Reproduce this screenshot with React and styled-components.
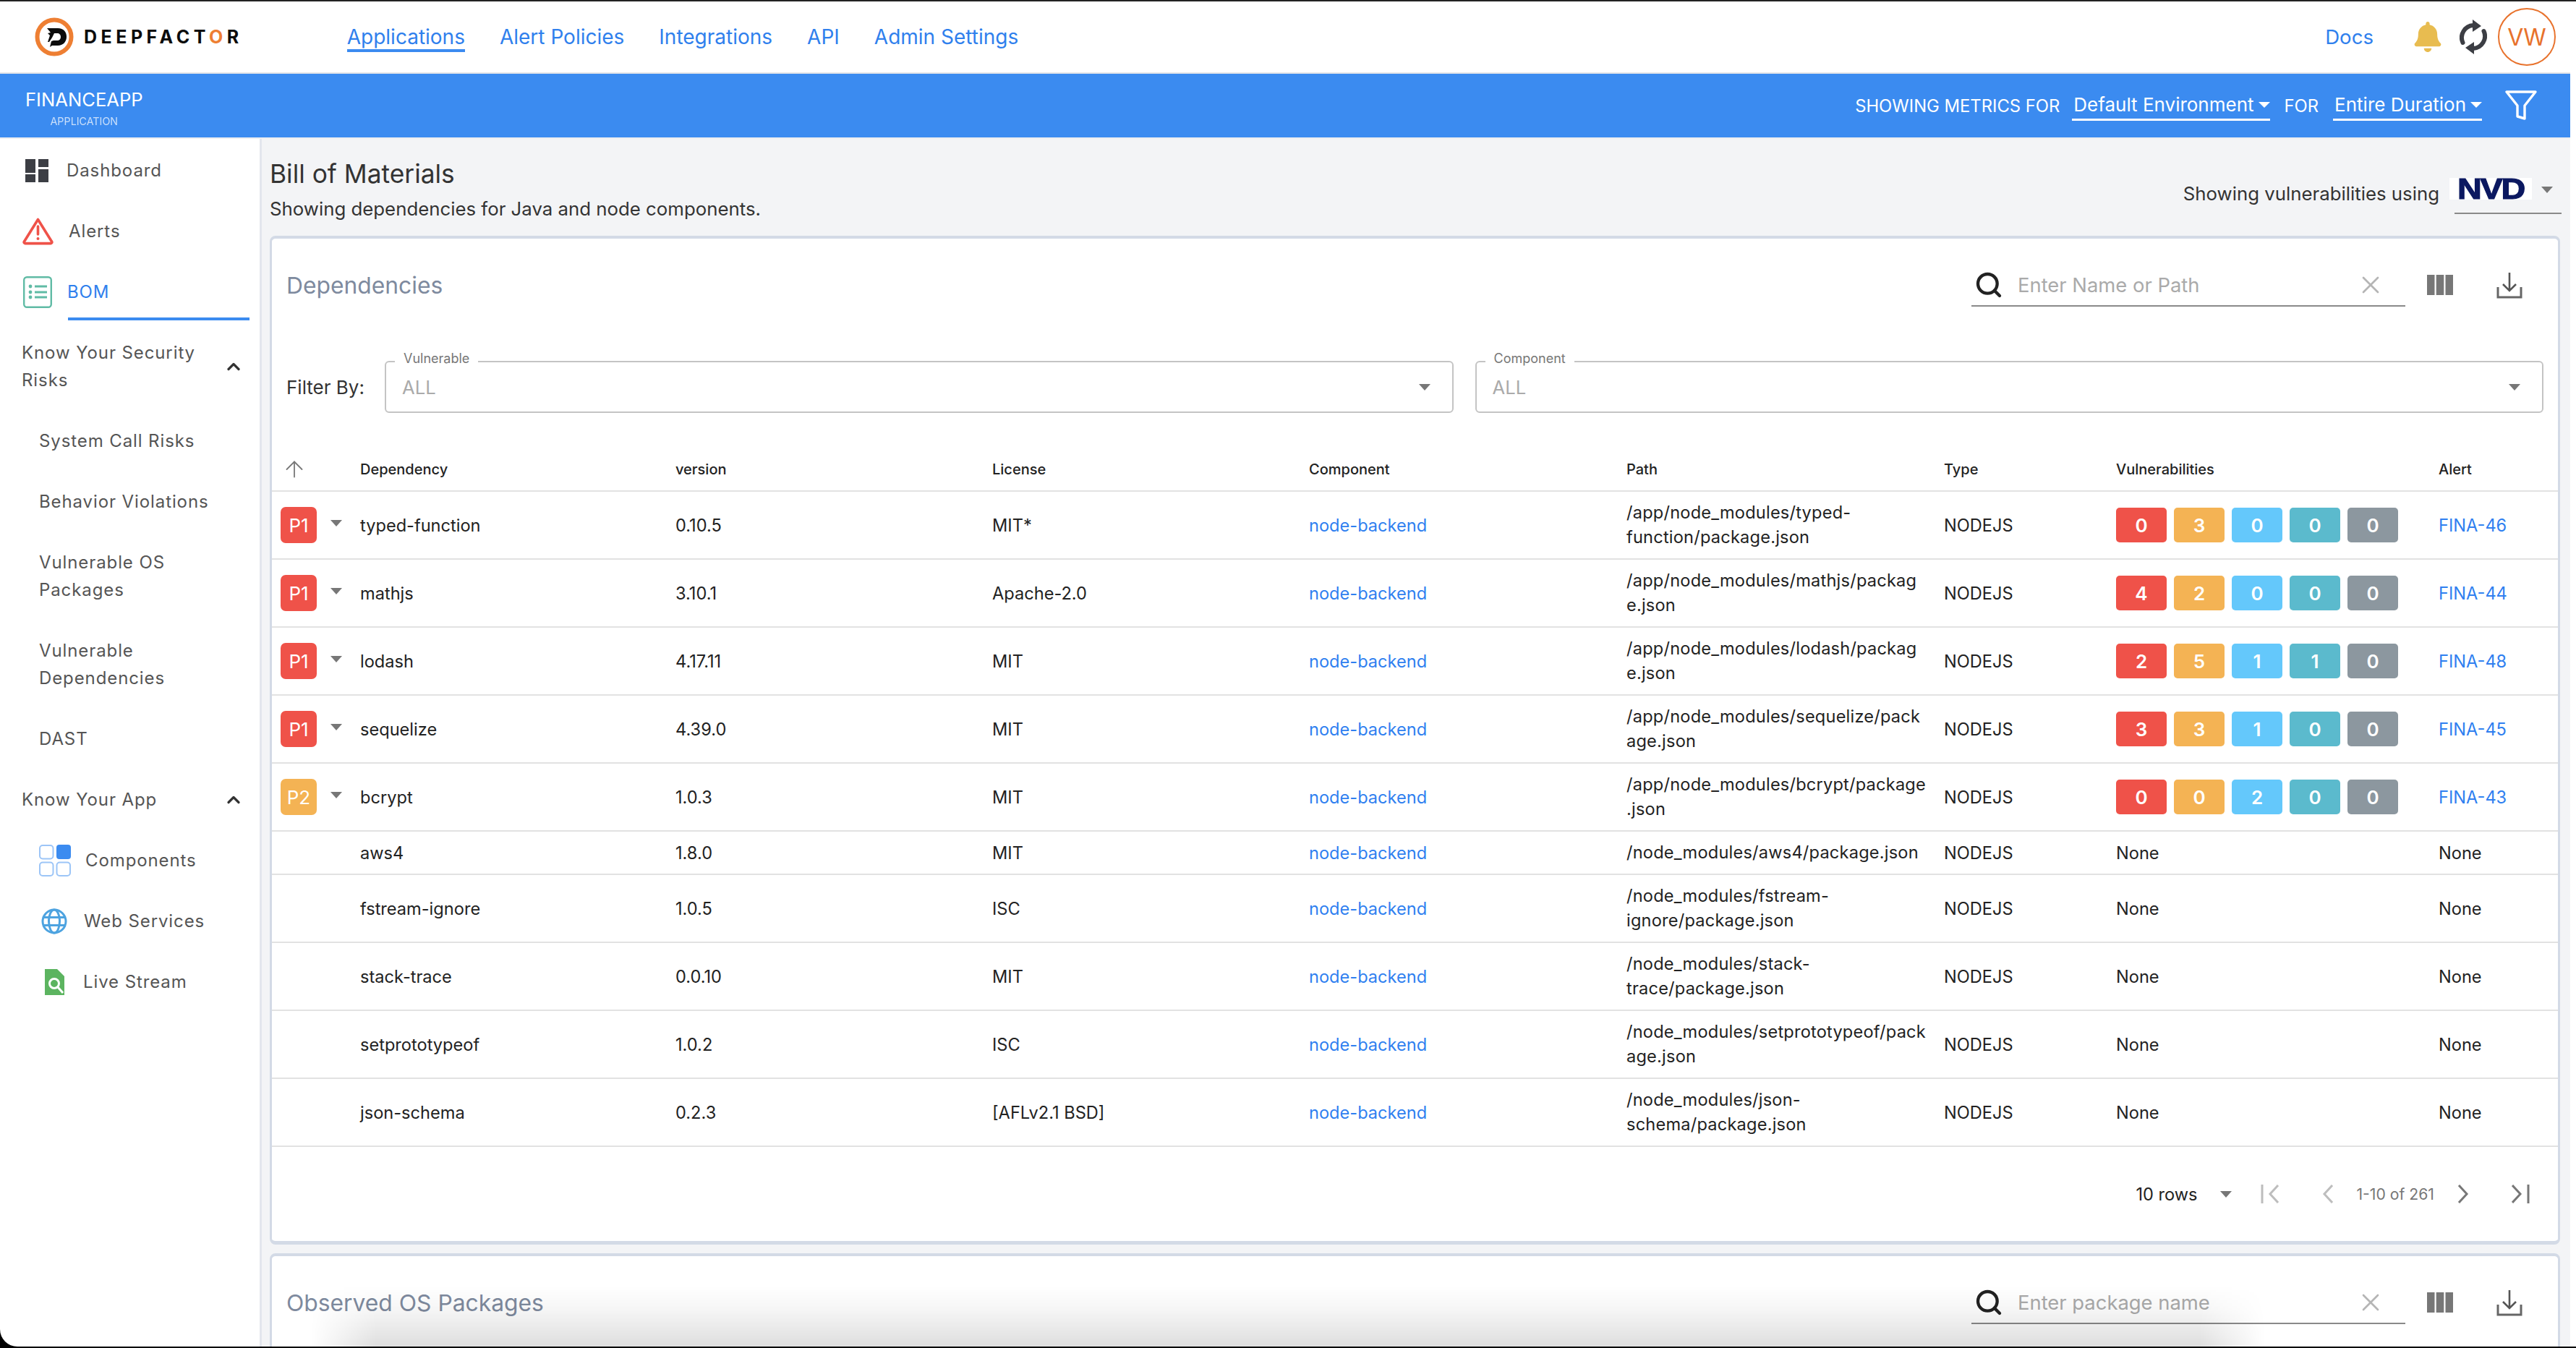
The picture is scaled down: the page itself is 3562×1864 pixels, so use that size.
import React from "react";
import styled, { createGlobalStyle } from "styled-components";
import { Search, X, ArrowUp, ChevronUp } from "lucide-react";
import { FaBell } from "react-icons/fa";

const Global = createGlobalStyle`
  html, body { margin: 0; padding: 0; background: #fff; overflow: hidden; }
  * { box-sizing: border-box; }
  body { font-family: Inter, "Noto Sans", sans-serif; color: #222; }
`;

const Page = styled.div`
  position: relative;
  width: 100vw;
  height: 100vh;
  overflow: hidden;
  background: #fff;
  padding-right: 8px;
  display: flex;
  flex-direction: column;
`;
const Frame = styled.div`
  position: absolute;
  inset: 0 0 2px 0;
  border-bottom-left-radius: 24px;
  box-shadow: 0 0 0 40px #000;
  pointer-events: none;
`;
const DockShade = styled.div`
  position: absolute;
  left: 430px;
  right: 430px;
  bottom: 2px;
  height: 84px;
  background: linear-gradient(180deg, rgba(0, 0, 0, 0) 0%, rgba(0, 0, 0, 0.03) 35%, rgba(0, 0, 0, 0.13) 100%);
  -webkit-mask-image: linear-gradient(90deg, transparent 0, #000 90px, #000 calc(100% - 90px), transparent 100%);
  mask-image: linear-gradient(90deg, transparent 0, #000 90px, #000 calc(100% - 90px), transparent 100%);
  pointer-events: none;
`;
const TopLine = styled.div`
  position: absolute;
  top: 0; left: 0; right: 0;
  height: 2px;
  background: #222;
`;
const TopBar = styled.header`
  height: 102px;
  flex: none;
  padding: 2px 20px 0 48px;
  border-bottom: 2px solid #e4e5e8;
  display: flex;
  align-items: center;
`;
const Logo = styled.div`
  display: flex;
  align-items: center;
  gap: 14px;
`;
const LogoText = styled.span`
  font-weight: 700;
  font-size: 25px;
  letter-spacing: 5.5px;
  color: #0c0c0c;
  white-space: nowrap;
  b { color: #ee7f33; font-weight: 700; }
`;
const Nav = styled.nav`
  margin-left: 144px;
  display: flex;
  gap: 48px;
`;
const NavLink = styled.a`
  position: relative;
  font-size: 28px;
  color: #2f80ed;
  white-space: nowrap;
  ${(p) => p.$active && `
    &::after {
      content: "";
      position: absolute;
      left: 0; right: 0; bottom: -4px;
      height: 4px;
      background: #3b8bf0;
    }
  `}
`;
const TopRight = styled.div`
  margin-left: auto;
  display: flex;
  align-items: center;
`;
const Docs = styled.a`
  font-size: 27.6px;
  color: #2f80ed;
  margin-right: 56px;
`;
const Bell = styled(FaBell)`
  width: 38px;
  height: 42px;
  color: #e8bc50;
  margin-right: 25px;
`;
const SyncIcon = styled.svg`
  margin-right: 15px;
  flex: none;
`;
const Avatar = styled.div`
  width: 80px;
  height: 80px;
  border-radius: 50%;
  border: 2px solid #e8722c;
  color: #e8722c;
  font-size: 32px;
  display: flex;
  align-items: center;
  justify-content: center;
`;

const Band = styled.div`
  height: 90px;
  flex: none;
  background: #3b8bf0;
  border-bottom: 2px solid #eceef1;
  padding: 0 46px 0 35px;
  display: flex;
  align-items: center;
  color: #fff;
`;
const AppName = styled.div`
  display: flex;
  flex-direction: column;
  align-items: center;
  padding-top: 6px;
`;
const AppTitle = styled.div`
  font-size: 25.6px;
  line-height: 34px;
`;
const AppSub = styled.div`
  font-size: 14.3px;
  line-height: 18px;
  margin-top: 4px;
  opacity: 0.72;
`;
const Metrics = styled.div`
  margin-left: auto;
  display: flex;
  align-items: center;
`;
const MetricText = styled.span`
  font-size: 23.8px;
  white-space: nowrap;
  margin-right: ${(p) => p.$gap}px;
`;
const Dropdown = styled.span`
  display: flex;
  align-items: center;
  gap: 6px;
  height: 42px;
  font-size: 26px;
  white-space: nowrap;
  border-bottom: 3px solid #fff;
  margin-right: ${(p) => p.$gap}px;
  padding-left: 2px;
`;
const WhiteCaret = styled.span`
  width: 0;
  height: 0;
  border-left: 8px solid transparent;
  border-right: 8px solid transparent;
  border-top: 8px solid #fff;
`;

const Body = styled.div`
  flex: 1;
  min-height: 0;
  display: flex;
`;
const Sidebar = styled.aside`
  width: 362px;
  flex: none;
  background: #fff;
  border-right: 3px solid #e3e6ed;
  color: #555;
  font-size: 24px;
  letter-spacing: 0.9px;
  line-height: 38px;
  padding-top: 2px;
`;
const SideItem = styled.div`
  position: relative;
  height: 84px;
  display: flex;
  align-items: center;
  padding-left: ${(p) => p.$pad ?? 31}px;
  color: ${(p) => (p.$active ? "#2f80ed" : "inherit")};
`;
const SideIcon = styled.svg`
  flex: none;
  margin-right: ${(p) => p.$gap}px;
`;
const ActiveBar = styled.span`
  position: absolute;
  left: 94px;
  right: 14px;
  bottom: 3px;
  height: 4px;
  background: #3b8bf0;
`;
const GroupHead = styled.div`
  display: flex;
  align-items: center;
  justify-content: space-between;
  padding: 23px 22px 23px 30px;
`;
const GroupText = styled.span`
  max-width: 260px;
`;
const Chevron = styled(ChevronUp)`
  color: #333;
  flex: none;
`;
const SubItem = styled.div`
  padding: 23px 60px 23px 54px;
`;

const Main = styled.main`
  flex: 1;
  min-width: 0;
  background: #f3f4f6;
  padding: 0 14px 0 11px;
  overflow: hidden;
`;
const TitleRow = styled.div`
  display: flex;
  justify-content: space-between;
  align-items: flex-end;
  padding-top: 26px;
  height: 134px;
`;
const TitleBlock = styled.div`
  align-self: flex-start;
`;
const Title = styled.h1`
  margin: 0;
  font-weight: 400;
  font-size: 35.3px;
  line-height: 46px;
  color: #333;
`;
const Subtitle = styled.p`
  margin: 7px 0 0;
  font-size: 25.8px;
  line-height: 36px;
  color: #333;
`;
const Source = styled.div`
  display: flex;
  align-items: center;
  margin-right: -2px;
  margin-bottom: 30px;
  font-size: 25.8px;
  color: #333;
`;
const SourceLabel = styled.span`
  margin-bottom: 8px;
  white-space: nowrap;
`;
const SourceSelect = styled.div`
  margin-left: 21px;
  width: 148px;
  height: 50px;
  border-bottom: 2px solid #8a8a8a;
  display: flex;
  align-items: flex-start;
  justify-content: space-between;
  padding-right: 12px;
`;
const NvdLogo = styled.span`
  display: block;
  width: 100px;
  height: 30px;
  background: #fff;
  color: #0b1860;
  font-family: "Liberation Sans", sans-serif;
  font-weight: 700;
  font-size: 41px;
  line-height: 30px;
  letter-spacing: -2px;
  text-align: center;
  -webkit-text-stroke: 1.2px #0b1860;
  transform: scaleX(1.14);
  transform-origin: 50% 50%;
`;
const GreyCaret = styled.span`
  width: 0;
  height: 0;
  border-left: 8px solid transparent;
  border-right: 8px solid transparent;
  border-top: 9px solid #777;
  margin-top: ${(p) => p.$top ?? 0}px;
  margin-left: ${(p) => p.$left ?? 0}px;
  flex: none;
`;

const Card = styled.section`
  background: #fff;
  border: solid #d3dae6;
  border-width: 4px 3px 5px;
  border-radius: 8px;
  margin-bottom: 12px;
  ${(p) => p.$open && "min-height: 400px;"}
`;
const CardHead = styled.div`
  height: 94px;
  padding: 36px 49px 0 20px;
  display: flex;
  align-items: flex-start;
  justify-content: space-between;
`;
const CardTitle = styled.h2`
  margin: 6px 0 0;
  font-weight: 400;
  font-size: 31.8px;
  line-height: 46px;
  color: #7e8a9e;
`;
const Tools = styled.div`
  display: flex;
  align-items: flex-start;
`;
const SearchBox = styled.div`
  width: 600px;
  height: 58px;
  border-bottom: 2px solid #8a8a8a;
  display: flex;
  align-items: center;
  padding: 0 28px 0 4px;
  color: #aaa;
  font-size: 27.4px;
`;
const SearchGlyph = styled(Search)`
  color: #222;
  flex: none;
  margin-right: 20px;
`;
const Clear = styled(X)`
  color: #b5b5b5;
  flex: none;
  margin-left: auto;
`;
const ColumnsIcon = styled.svg`
  margin: 14px 0 0 30px;
`;
const DownloadIcon = styled.svg`
  margin: 10px 0 0 60px;
`;

const FilterRow = styled.div`
  margin-top: 75px;
  padding: 0 20px;
  display: flex;
  align-items: center;
  gap: 30px;
`;
const FilterLabel = styled.span`
  font-size: 26px;
  color: #333;
  width: 106px;
  white-space: nowrap;
`;
const FilterBox = styled.div`
  position: relative;
  flex: 1;
  height: 72px;
  border: 2px solid #c4c4c4;
  border-radius: 6px;
  display: flex;
  align-items: center;
  justify-content: space-between;
  padding: 0 30px 0 22px;
  font-size: 25.6px;
  color: #aaa;
`;
const Legend = styled.span`
  position: absolute;
  top: -17px;
  left: 12px;
  padding: 0 12px;
  background: #fff;
  font-size: 18px;
  line-height: 24px;
  color: #777;
`;

const columns = "122px 436px 438px 438px 439px 439px 238px 446px 1fr";
const HeadRow = styled.div`
  margin-top: 49px;
  height: 60px;
  display: grid;
  grid-template-columns: ${columns};
  align-items: center;
  border-bottom: 2px solid #e2e2e2;
  font-size: 20px;
  font-weight: 500;
  color: #222;
`;
const SortCell = styled.div`
  padding-left: 13px;
  display: flex;
  color: #777;
`;
const Row = styled.div`
  height: ${(p) => (p.$short ? 60 : 94)}px;
  display: grid;
  grid-template-columns: ${columns};
  align-items: center;
  border-bottom: 2px solid #e2e2e2;
  font-size: 23.6px;
  color: #222;
`;
const PriorityCell = styled.div`
  padding-left: 12px;
  display: flex;
  align-items: center;
`;
const Priority = styled.span`
  width: 50px;
  height: 50px;
  border-radius: 7px;
  background: ${(p) => p.$color};
  color: #fff;
  font-size: 26px;
  display: flex;
  align-items: center;
  justify-content: center;
`;
const PathCell = styled.div`
  width: 414px;
  line-height: 34px;
  letter-spacing: 0.2px;
  overflow-wrap: anywhere;
`;
const LinkCell = styled.a`
  color: #2f7ff0;
`;
const Chips = styled.div`
  display: flex;
  gap: 10px;
`;
const Chip = styled.span`
  width: 70px;
  height: 48px;
  border-radius: 5px;
  background: ${(p) => p.$color};
  color: #fff;
  font-size: 26px;
  font-weight: 600;
  display: flex;
  align-items: center;
  justify-content: center;
`;
const Pager = styled.div`
  height: 130px;
  padding-right: 39px;
  display: flex;
  align-items: center;
  justify-content: flex-end;
`;
const PagerRows = styled.span`
  font-size: 23.6px;
  color: #222;
`;
const PagerCount = styled.span`
  font-size: 21.2px;
  color: #777;
  margin-left: 32px;
  white-space: nowrap;
`;
const PagerIcon = styled.svg`
  margin-left: ${(p) => p.$left}px;
  color: ${(p) => (p.$off ? "#bdbdbd" : "#777")};
`;

const RED = "#ef5249";
const ORANGE = "#f4b354";
const SKY = "#64c8fb";
const TEAL = "#5bbacd";
const GREY = "#8c979f";

const flagged = [
  ["P1", "typed-function", "0.10.5", "MIT*", "/app/node_modules/typed-function/package.json", [0, 3, 0, 0, 0], "FINA-46"],
  ["P1", "mathjs", "3.10.1", "Apache-2.0", "/app/node_modules/mathjs/package.json", [4, 2, 0, 0, 0], "FINA-44"],
  ["P1", "lodash", "4.17.11", "MIT", "/app/node_modules/lodash/package.json", [2, 5, 1, 1, 0], "FINA-48"],
  ["P1", "sequelize", "4.39.0", "MIT", "/app/node_modules/sequelize/package.json", [3, 3, 1, 0, 0], "FINA-45"],
  ["P2", "bcrypt", "1.0.3", "MIT", "/app/node_modules/bcrypt/package.json", [0, 0, 2, 0, 0], "FINA-43"],
];
const plain = [
  ["aws4", "1.8.0", "MIT", "/node_modules/aws4/package.json", true],
  ["fstream-ignore", "1.0.5", "ISC", "/node_modules/fstream-ignore/package.json"],
  ["stack-trace", "0.0.10", "MIT", "/node_modules/stack-trace/package.json"],
  ["setprototypeof", "1.0.2", "ISC", "/node_modules/setprototypeof/package.json"],
  ["json-schema", "0.2.3", "[AFLv2.1 BSD]", "/node_modules/json-schema/package.json"],
];

const LogoMark = () => (
  <svg width="54" height="54" viewBox="0 0 54 54">
    <circle cx="27" cy="27" r="23.5" fill="none" stroke="#ee7f33" strokeWidth="6" />
    <path d="M15 15h17c8 0 12 5 12 12s-5 12-12 12H24l-3 2 2-8 3-1h5c3 0 5-2 5-5s-2-5-5-5h-4l-3 6-4 6h-2l3-9-3-3 4-1-5-6z" fill="#0c0c0c" />
  </svg>
);

const Tool = ({ placeholder }) => (
  <Tools>
    <SearchBox>
      <SearchGlyph size={40} strokeWidth={2.6} />
      <span>{placeholder}</span>
      <Clear size={40} strokeWidth={1.6} />
    </SearchBox>
    <ColumnsIcon width="36" height="28" viewBox="0 0 36 28">
      <path d="M0 0h10.5v28H0zM12.7 0h10.6v28H12.7zM25.5 0H36v28H25.5z" fill="#777" />
    </ColumnsIcon>
    <DownloadIcon width="36" height="38" viewBox="0 0 36 38">
      <path d="M18 1v24M9 17l9 9 9-9" fill="none" stroke="#555" strokeWidth="2.6" />
      <path d="M2 21v14h32V21" fill="none" stroke="#666" strokeWidth="3" />
    </DownloadIcon>
  </Tools>
);

export default function App() {
  return (
    <Page>
      <Global />
      <TopBar>
        <Logo>
          <LogoMark />
          <LogoText>DEEPFACT<b>O</b>R</LogoText>
        </Logo>
        <Nav>
          <NavLink $active>Applications</NavLink>
          <NavLink>Alert Policies</NavLink>
          <NavLink>Integrations</NavLink>
          <NavLink>API</NavLink>
          <NavLink>Admin Settings</NavLink>
        </Nav>
        <TopRight>
          <Docs>Docs</Docs>
          <Bell />
          <SyncIcon width="38" height="48" viewBox="0 0 38 48">
            <g fill="none" stroke="#3c3e44" strokeWidth="6" strokeLinecap="round">
              <path d="M4.5 32A17 17 0 0 1 19 8" />
              <path d="M33.5 16A17 17 0 0 1 19 40" />
            </g>
            <path d="M18 0l12 9-12 8zM20 31L8 39l12 9z" fill="#3c3e44" />
          </SyncIcon>
          <Avatar>VW</Avatar>
        </TopRight>
      </TopBar>
      <Band>
        <AppName>
          <AppTitle>FINANCEAPP</AppTitle>
          <AppSub>APPLICATION</AppSub>
        </AppName>
        <Metrics>
          <MetricText $gap={17}>SHOWING METRICS FOR</MetricText>
          <Dropdown $gap={20}>Default Environment<WhiteCaret /></Dropdown>
          <MetricText $gap={20}>FOR</MetricText>
          <Dropdown $gap={32}>Entire Duration<WhiteCaret /></Dropdown>
          <svg width="44" height="42" viewBox="0 0 44 42">
            <path d="M2 2h40L27 21v18l-10-3V21z" fill="none" stroke="#fff" strokeWidth="3.4" strokeLinejoin="round" />
          </svg>
        </Metrics>
      </Band>
      <Body>
        <Sidebar>
          <SideItem $pad={35}>
            <SideIcon $gap={25} width="32" height="32" viewBox="0 0 32 32">
              <path d="M0 0h14v19H0zM18 0h14v11H18zM0 21h14v11H0zM18 14h14v18H18z" fill="#3c3e44" />
            </SideIcon>
            Dashboard
          </SideItem>
          <SideItem>
            <SideIcon $gap={21} width="43" height="38" viewBox="0 0 43 38">
              <path d="M21.5 2.5 40.5 33a1.6 1.6 0 0 1-1.4 2.6H3.9A1.6 1.6 0 0 1 2.5 33z" fill="none" stroke="#ef5249" strokeWidth="3.6" strokeLinejoin="round" />
              <path d="M21.5 12v11" stroke="#ef5249" strokeWidth="3.6" strokeLinecap="round" />
              <circle cx="21.5" cy="29" r="2" fill="#ef5249" />
            </SideIcon>
            Alerts
          </SideItem>
          <SideItem $active $pad={32}>
            <SideIcon $gap={21} width="40" height="44" viewBox="0 0 40 44">
              <rect x="1.2" y="1.2" width="37.6" height="41.6" rx="4" fill="none" stroke="#60bba5" strokeWidth="2.4" />
              <circle cx="10" cy="14" r="2.4" fill="#60bba5" />
              <circle cx="10" cy="22" r="2.4" fill="#60bba5" />
              <circle cx="10" cy="29" r="2.4" fill="#60bba5" />
              <path d="M16 14h17M16 22h17M16 29h17" stroke="#60bba5" strokeWidth="3" />
            </SideIcon>
            BOM
            <ActiveBar />
          </SideItem>
          <GroupHead>
            <GroupText>Know Your Security Risks</GroupText>
            <Chevron size={28} strokeWidth={2.8} />
          </GroupHead>
          <SubItem>System Call Risks</SubItem>
          <SubItem>Behavior Violations</SubItem>
          <SubItem>Vulnerable OS Packages</SubItem>
          <SubItem>Vulnerable Dependencies</SubItem>
          <SubItem>DAST</SubItem>
          <GroupHead>
            <GroupText>Know Your App</GroupText>
            <Chevron size={28} strokeWidth={2.8} />
          </GroupHead>
          <SideItem $pad={54}>
            <SideIcon $gap={20} width="44" height="44" viewBox="0 0 44 44">
              <rect x="1" y="1" width="18.5" height="18.5" rx="4" fill="none" stroke="#9cc5f7" strokeWidth="2" />
              <rect x="24" y="0" width="20" height="20" rx="4" fill="#3b8bf0" />
              <rect x="1" y="24.5" width="18.5" height="18.5" rx="4" fill="none" stroke="#9cc5f7" strokeWidth="2" />
              <rect x="24.5" y="24.5" width="18.5" height="18.5" rx="4" fill="none" stroke="#9cc5f7" strokeWidth="2" />
            </SideIcon>
            Components
          </SideItem>
          <SideItem $pad={57}>
            <SideIcon $gap={23} width="36" height="36" viewBox="0 0 36 36">
              <g fill="none" stroke="#4da3e0" strokeWidth="3">
                <circle cx="18" cy="18" r="16" />
                <ellipse cx="18" cy="18" rx="7.5" ry="16" />
                <path d="M3 12.5h30M3 23.5h30" />
              </g>
            </SideIcon>
            Web Services
          </SideItem>
          <SideItem $pad={61}>
            <SideIcon $gap={26} width="28" height="36" viewBox="0 0 28 36">
              <path d="M1 0h17l10 10v26H1z" fill="#5cb460" />
              <circle cx="14" cy="20" r="6.5" fill="none" stroke="#fff" strokeWidth="3" />
              <path d="M19 25l7 8" stroke="#fff" strokeWidth="3" />
            </SideIcon>
            Live Stream
          </SideItem>
        </Sidebar>
        <Main>
          <TitleRow>
            <TitleBlock>
              <Title>Bill of Materials</Title>
              <Subtitle>Showing dependencies for Java and node components.</Subtitle>
            </TitleBlock>
            <Source>
              <SourceLabel>Showing vulnerabilities using</SourceLabel>
              <SourceSelect>
                <NvdLogo>NVD</NvdLogo>
                <GreyCaret $top={12} />
              </SourceSelect>
            </Source>
          </TitleRow>
          <Card>
            <CardHead>
              <CardTitle>Dependencies</CardTitle>
              <Tool placeholder="Enter Name or Path" />
            </CardHead>
            <FilterRow>
              <FilterLabel>Filter By:</FilterLabel>
              <FilterBox>
                <Legend>Vulnerable</Legend>
                ALL
                <GreyCaret />
              </FilterBox>
              <FilterBox>
                <Legend>Component</Legend>
                ALL
                <GreyCaret />
              </FilterBox>
            </FilterRow>
            <HeadRow>
              <SortCell><ArrowUp size={36} strokeWidth={1.2} /></SortCell>
              <span>Dependency</span>
              <span>version</span>
              <span>License</span>
              <span>Component</span>
              <span>Path</span>
              <span>Type</span>
              <span>Vulnerabilities</span>
              <span>Alert</span>
            </HeadRow>
            {flagged.map((r) => (
              <Row key={r[1]}>
                <PriorityCell>
                  <Priority $color={r[0] === "P1" ? RED : ORANGE}>{r[0]}</Priority>
                  <GreyCaret $left={19} $top={-6} />
                </PriorityCell>
                <span>{r[1]}</span>
                <span>{r[2]}</span>
                <span>{r[3]}</span>
                <LinkCell>node-backend</LinkCell>
                <PathCell>{r[4]}</PathCell>
                <span>NODEJS</span>
                <Chips>
                  {r[5].map((n, i) => (
                    <Chip key={i} $color={[RED, ORANGE, SKY, TEAL, GREY][i]}>{n}</Chip>
                  ))}
                </Chips>
                <LinkCell>{r[6]}</LinkCell>
              </Row>
            ))}
            {plain.map((r) => (
              <Row key={r[0]} $short={r[4]}>
                <span />
                <span>{r[0]}</span>
                <span>{r[1]}</span>
                <span>{r[2]}</span>
                <LinkCell>node-backend</LinkCell>
                <PathCell>{r[3]}</PathCell>
                <span>NODEJS</span>
                <span>None</span>
                <span>None</span>
              </Row>
            ))}
            <Pager>
              <PagerRows>10 rows</PagerRows>
              <GreyCaret $left={31} />
              <PagerIcon $off $left={40} width="27" height="26" viewBox="0 0 27 26">
                <path d="M2 0v26" stroke="currentColor" strokeWidth="3" />
                <path d="M24 1 13 13l11 12" fill="none" stroke="currentColor" strokeWidth="3" />
              </PagerIcon>
              <PagerIcon $off $left={58} width="16" height="26" viewBox="0 0 16 26">
                <path d="M14 1 3 13l11 12" fill="none" stroke="currentColor" strokeWidth="3" />
              </PagerIcon>
              <PagerCount>1-10 of 261</PagerCount>
              <PagerIcon $left={32} width="16" height="26" viewBox="0 0 16 26">
                <path d="M2 1l11 12L2 25" fill="none" stroke="currentColor" strokeWidth="3" />
              </PagerIcon>
              <PagerIcon $left={59} width="25" height="26" viewBox="0 0 25 26">
                <path d="M1 1l11 12L1 25" fill="none" stroke="currentColor" strokeWidth="3" />
                <path d="M23 0v26" stroke="currentColor" strokeWidth="3" />
              </PagerIcon>
            </Pager>
          </Card>
          <Card $open>
            <CardHead>
              <CardTitle>Observed OS Packages</CardTitle>
              <Tool placeholder="Enter package name" />
            </CardHead>
          </Card>
        </Main>
      </Body>
      <TopLine />
      <DockShade />
      <Frame />
    </Page>
  );
}
